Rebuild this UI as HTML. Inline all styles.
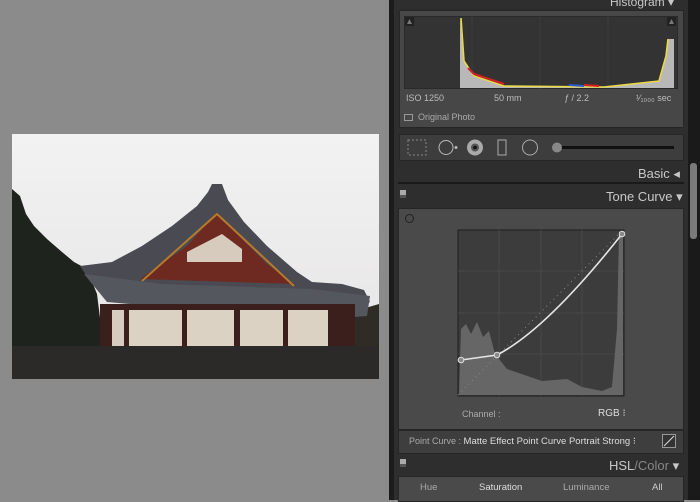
<!DOCTYPE html>
<html><head><style>
*{margin:0;padding:0;box-sizing:border-box}
body{width:700px;height:500px;overflow:hidden;background:#8b8b8b;font-family:"Liberation Sans",sans-serif;position:relative}
.a{position:absolute}
.t{color:#c8c8c8;font-size:12px}
</style></head><body>
<!-- photo -->
<svg class="a" style="left:12px;top:134px" width="367" height="245" viewBox="0 0 367 245">
<defs><linearGradient id="sky" x1="0" y1="0" x2="0" y2="1"><stop offset="0" stop-color="#f2f2f3"/><stop offset="1" stop-color="#e6e4e4"/></linearGradient></defs>
<rect width="367" height="245" fill="url(#sky)"/>
<!-- trees left -->
<path d="M0 55 L8 62 L14 80 L22 92 L35 105 L50 118 L62 128 L75 135 L85 160 L90 200 L85 245 L0 245Z" fill="#1f231e"/>
<path d="M335 185 L350 175 L367 170 L367 245 L320 245Z" fill="#2e2c24"/>
<!-- main roof -->
<path d="M68 132 L100 128 L130 112 L160 92 L185 72 L196 58 L200 50 L210 50 L216 66 L232 88 L255 112 L285 138 L300 148 L330 150 L352 156 L358 168 L340 178 L300 176 L200 168 L120 165 L80 150Z" fill="#4a4b52"/>
<!-- gable -->
<path d="M128 145 L175 112 L205 78 L225 100 L255 130 L282 150Z" fill="#6e2a20"/>
<path d="M175 118 L210 100 L230 115 L230 128 L175 128Z" fill="#d6cbbd"/>
<path d="M130 147 L205 80 L282 152" fill="none" stroke="#b57a2c" stroke-width="2"/>
<!-- lower tiles -->
<path d="M72 140 L150 150 L300 155 L358 162 L355 182 L300 186 L95 168Z" fill="#55575e"/>
<!-- walls -->
<rect x="88" y="170" width="255" height="46" fill="#3a1f1c"/>
<rect x="100" y="176" width="12" height="36" fill="#d6ccbf"/>
<rect x="117" y="176" width="53" height="36" fill="#dcd2c4"/>
<rect x="175" y="176" width="47" height="36" fill="#dcd2c4"/>
<rect x="228" y="176" width="43" height="36" fill="#dcd2c4"/>
<rect x="276" y="176" width="40" height="36" fill="#dcd2c4"/>
<rect x="0" y="212" width="367" height="33" fill="#2c2a29"/>
</svg>
<!-- panel -->
<div class="a" style="left:389px;top:0;width:5px;height:500px;background:#1c1c1c"></div>
<div class="a" style="left:394px;top:0;width:294px;height:500px;background:#2e2e2e"></div>
<div class="a" style="left:688px;top:0;width:12px;height:500px;background:#1a1a1a"></div>
<div class="a" style="left:690px;top:163px;width:7px;height:76px;background:#7a7a7a;border-radius:3px"></div>
<div class="a t" style="left:610px;top:-5px;font-size:12px">Histogram ▾</div>
<!-- histogram box -->
<div class="a" style="left:399px;top:10px;width:285px;height:118px;background:#474747;border:1px solid #262626"></div>
<svg class="a" style="left:404px;top:16px" width="274" height="73">
<rect width="274" height="73" fill="#333" stroke="#222"/>
<line x1="68" y1="0" x2="68" y2="73" stroke="#3b3b3b"/><line x1="136" y1="0" x2="136" y2="73" stroke="#3b3b3b"/><line x1="204" y1="0" x2="204" y2="73" stroke="#3b3b3b"/>
<path d="M56 72 L56 2 L60 45 L70 60 L100 70 L200 71 L255 65 L262 40 L264 23 L270 23 L270 72Z" fill="#b8b8b8"/>
<path d="M57 2 L60 45 L70 60 L100 70 L200 71 L255 65 L262 40 L264 23" fill="none" stroke="#e8d84a" stroke-width="1.6"/>
<path d="M64 52 L70 58 L100 68" stroke="#d42020" stroke-width="2" fill="none"/>
<path d="M165 69 L180 70" stroke="#2a5ad0" stroke-width="2"/><path d="M180 69 L195 70" stroke="#d42020" stroke-width="2"/>
<path d="M1 1 h9 v9 h-9z" fill="#222"/><path d="M3 8 L5.5 3 L8 8Z" fill="#777"/>
<path d="M263 1 h9 v9 h-9z" fill="#222"/><path d="M265 8 L267.5 3 L270 8Z" fill="#777"/>
</svg>
<div class="a t" style="left:406px;top:93px;font-size:9px;color:#bbb">ISO 1250</div>
<div class="a t" style="left:494px;top:93px;font-size:9px;color:#bbb">50 mm</div>
<div class="a t" style="left:564px;top:93px;font-size:9px;color:#bbb"><i>ƒ</i> / 2.2</div>
<div class="a t" style="left:636px;top:93px;font-size:9px;color:#bbb">¹⁄₁₀₀₀ sec</div>
<div class="a" style="left:404px;top:114px;width:9px;height:7px;border:1px solid #999"></div>
<div class="a t" style="left:418px;top:112px;font-size:9px;color:#aaa">Original Photo</div>
<!-- toolbar -->
<div class="a" style="left:399px;top:134px;width:285px;height:27px;background:#3d3d3d;border:1px solid #262626"></div>
<svg class="a" style="left:404px;top:136px" width="275" height="23">
<rect x="4" y="4" width="18" height="15" fill="none" stroke="#888" stroke-dasharray="2 2"/>
<circle cx="42" cy="11.5" r="7" fill="none" stroke="#bbb"/><circle cx="52" cy="11.5" r="1.5" fill="#bbb"/>
<circle cx="71" cy="11.5" r="8" fill="#aaa"/><circle cx="71" cy="11.5" r="4" fill="#555"/><circle cx="71" cy="11.5" r="1.8" fill="#111"/>
<rect x="94" y="4" width="8" height="15" fill="none" stroke="#aaa"/>
<circle cx="126" cy="11.5" r="7.5" fill="none" stroke="#aaa"/>
<line x1="150" y1="11.5" x2="270" y2="11.5" stroke="#111" stroke-width="3"/>
<circle cx="153" cy="11.5" r="5" fill="#888"/>
</svg>
<div class="a t" style="left:638px;top:166px;font-size:13px">Basic ◂</div>
<div class="a" style="left:398px;top:182px;width:286px;height:2px;background:#1a1a1a"></div>
<div class="a" style="left:400px;top:190px;width:6px;height:8px;background:#aaa;border-bottom:3px solid #555"></div>
<div class="a t" style="left:606px;top:189px;font-size:13px">Tone Curve ▾</div>
<!-- tone box -->
<div class="a" style="left:398px;top:208px;width:286px;height:222px;background:#4a4a4a;border:1px solid #262626"></div>
<div class="a" style="left:405px;top:214px;width:9px;height:9px;border:1.5px solid #222;border-radius:50%"></div>
<svg class="a" style="left:457px;top:229px" width="169" height="168">
<rect x="1" y="1" width="166" height="166" fill="#3c3c3c" stroke="#1f1f1f"/>
<g stroke="#474747"><line x1="42" y1="1" x2="42" y2="167"/><line x1="84" y1="1" x2="84" y2="167"/><line x1="125" y1="1" x2="125" y2="167"/><line x1="1" y1="42" x2="167" y2="42"/><line x1="1" y1="84" x2="167" y2="84"/><line x1="1" y1="125" x2="167" y2="125"/></g>
<path d="M2 166 L4 100 L9 95 L14 105 L20 93 L26 108 L32 102 L38 125 L50 140 L85 152 L110 150 L125 158 L145 162 L155 158 L160 100 L162 5 L166 5 L166 166Z" fill="#666"/>
<path d="M1 166 L166 1" stroke="#888" stroke-dasharray="1 4"/>
<path d="M4 131 L40 126 Q90 100 165 5" fill="none" stroke="#e6e6e6" stroke-width="1.6"/>
<circle cx="4" cy="131" r="2.8" fill="#888" stroke="#ddd"/><circle cx="40" cy="126" r="2.8" fill="#888" stroke="#ddd"/><circle cx="165" cy="5" r="2.8" fill="#888" stroke="#ddd"/>
</svg>
<div class="a t" style="left:462px;top:409px;font-size:9px;color:#aaa">Channel :</div>
<div class="a t" style="left:598px;top:408px;font-size:10px;color:#ddd">RGB ⁝</div>
<div class="a" style="left:398px;top:430px;width:286px;height:24px;background:#3e3e3e;border:1px solid #262626"></div>
<div class="a t" style="left:409px;top:436px;font-size:9px;color:#aaa">Point Curve : <span style="color:#ddd;font-size:9.5px">Matte Effect Point Curve Portrait Strong ⁝</span></div>
<svg class="a" style="left:662px;top:434px" width="14" height="14"><rect x=".5" y=".5" width="13" height="13" fill="#333" stroke="#999"/><line x1="2" y1="12" x2="12" y2="2" stroke="#ddd"/></svg>
<div class="a" style="left:400px;top:459px;width:6px;height:8px;background:#aaa;border-bottom:3px solid #555"></div>
<div class="a t" style="left:609px;top:458px;font-size:13px">HSL<span style="color:#888">/Color</span> ▾</div>
<div class="a" style="left:398px;top:476px;width:286px;height:26px;background:#4a4a4a;border:1px solid #262626"></div>
<div class="a t" style="left:420px;top:482px;font-size:9.5px;color:#aaa">Hue</div>
<div class="a t" style="left:479px;top:482px;font-size:9.5px;color:#ddd">Saturation</div>
<div class="a t" style="left:563px;top:482px;font-size:9.5px;color:#aaa">Luminance</div>
<div class="a t" style="left:652px;top:482px;font-size:9.5px;color:#ccc">All</div>
</body></html>
